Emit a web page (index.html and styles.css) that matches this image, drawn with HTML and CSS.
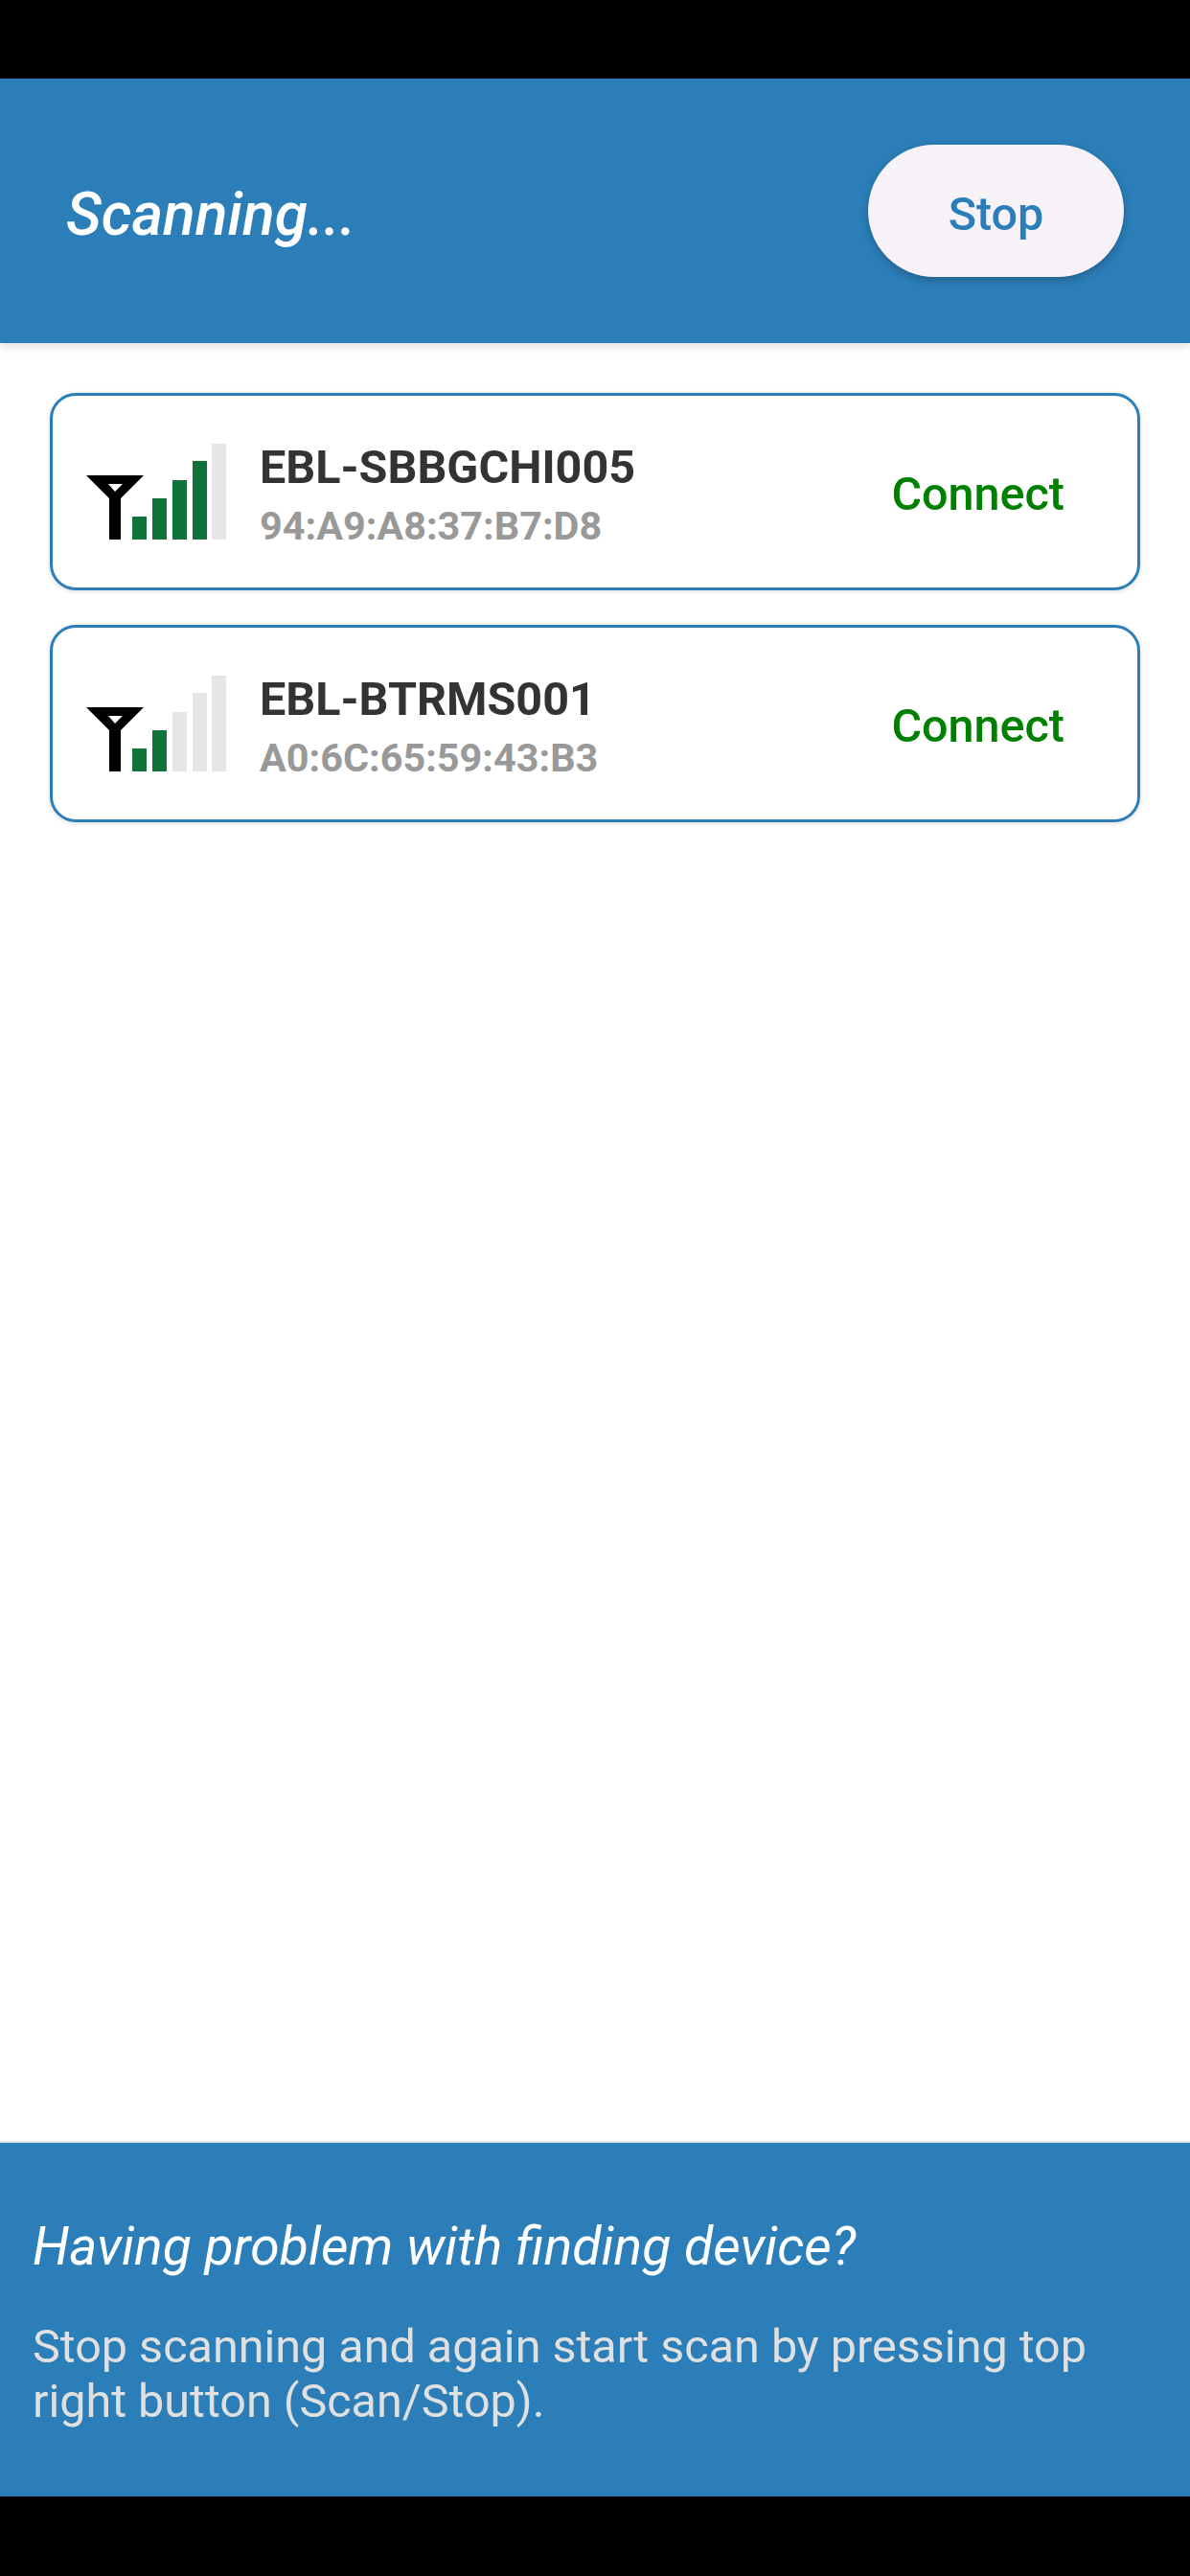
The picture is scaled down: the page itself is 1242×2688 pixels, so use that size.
FILE: index.html
```html
<!DOCTYPE html>
<html lang="en">
<head>
<meta charset="utf-8">
<title>Scanning</title>
<link rel="stylesheet" href="styles.css">
</head>
<body>
<div class="screen">
  <div class="inset"></div>
  <header class="header">
    <h1 class="title">Scanning...</h1>
    <button class="stop">Stop</button>
  </header>
  <main class="list">
    <div class="card">
      <svg class="signal" viewBox="0 0 146 100" width="146" height="100">
        <path class="ant" fill-rule="evenodd" d="M0 33H60L36 57V100H24V57ZM23 42L30 50L38 42Z"/>
        <rect class="on" x="48" y="76" width="15" height="24"/>
        <rect class="on" x="69" y="57" width="15" height="43"/>
        <rect class="on" x="90" y="38" width="15" height="62"/>
        <rect class="on" x="111" y="18" width="15" height="82"/>
        <rect class="off" x="131" y="0" width="15" height="100"/>
      </svg>
      <div class="info">
        <div class="name">EBL-SBBGCHI005</div>
        <div class="mac">94:A9:A8:37:B7:D8</div>
      </div>
      <div class="connect">Connect</div>
    </div>
    <div class="card">
      <svg class="signal" viewBox="0 0 146 100" width="146" height="100">
        <path class="ant" fill-rule="evenodd" d="M0 33H60L36 57V100H24V57ZM23 42L30 50L38 42Z"/>
        <rect class="on" x="48" y="76" width="15" height="24"/>
        <rect class="on" x="69" y="57" width="15" height="43"/>
        <rect class="off" x="90" y="38" width="15" height="62"/>
        <rect class="off" x="111" y="18" width="15" height="82"/>
        <rect class="off" x="131" y="0" width="15" height="100"/>
      </svg>
      <div class="info">
        <div class="name">EBL-BTRMS001</div>
        <div class="mac">A0:6C:65:59:43:B3</div>
      </div>
      <div class="connect">Connect</div>
    </div>
  </main>
  <footer class="footer">
    <h2 class="help-title">Having problem with finding device?</h2>
    <p class="help-text">Stop scanning and again start scan by pressing top right button (Scan/Stop).</p>
  </footer>
  <div class="inset bottom"></div>
</div>
</body>
</html>
```
FILE: styles.css
```css
* { box-sizing: border-box; }
html, body { margin: 0; padding: 0; }
body { background: #000; font-family: Roboto, "Liberation Sans", sans-serif; }
.screen { width: 1242px; height: 2688px; display: flex; flex-direction: column; background: #fff; }
.inset { height: 82px; background: #000; flex: none; }
.inset.bottom { height: 83px; }
.header {
  height: 276px; flex: none; background: #2b7eb8; display: flex; align-items: center;
  justify-content: space-between; padding: 0 69px;
  box-shadow: 0 3px 10px rgba(0,0,0,.15); position: relative;
}
.title { margin: 0; padding-top: 6px; font-size: 62.5px; font-weight: 500; font-style: italic; color: #fff; }
.stop {
  width: 267px; height: 138px; border: 0; border-radius: 69px; background: #f6f2f8; color: #2b7eb8;
  font-family: inherit; font-size: 48.5px; font-weight: 500; padding: 6px 0 0;
  box-shadow: 0 3px 8px rgba(0,0,0,.25);
}
.list { flex: 1; padding: 52px 52px 0; display: flex; flex-direction: column; gap: 36px; }
.card {
  height: 206px; border: 3px solid #2b7eb8; border-radius: 27px; background: #fff;
  display: flex; align-items: center; padding: 0 76px 0 35px;
  box-shadow: 0 1px 5px rgba(0,0,0,.15);
}
.signal { flex: none; margin-right: 35px; }
.ant { fill: #000; }
.on { fill: #0e7239; }
.off { fill: #e6e6e6; }
.info { flex: 1; padding-top: 12px; }
.name { font-size: 48.5px; font-weight: 700; color: #333; line-height: 56px; margin-bottom: 5px; }
.mac { font-size: 41.4px; font-weight: 700; color: #999; line-height: 57px; }
.connect { font-size: 48.5px; font-weight: 500; color: #008000; padding-top: 5px; }
.footer { height: 371px; flex: none; background: #2b7eb8; padding: 77px 34px 0; border-top: 2px solid #d9e4ec; }
.help-title { margin: 0 0 43px; font-size: 55.3px; font-weight: 400; font-style: italic; color: #fff; line-height: 64px; }
.help-text { margin: 0; font-size: 48.5px; color: #e0e0e0; line-height: 57px; }
```
